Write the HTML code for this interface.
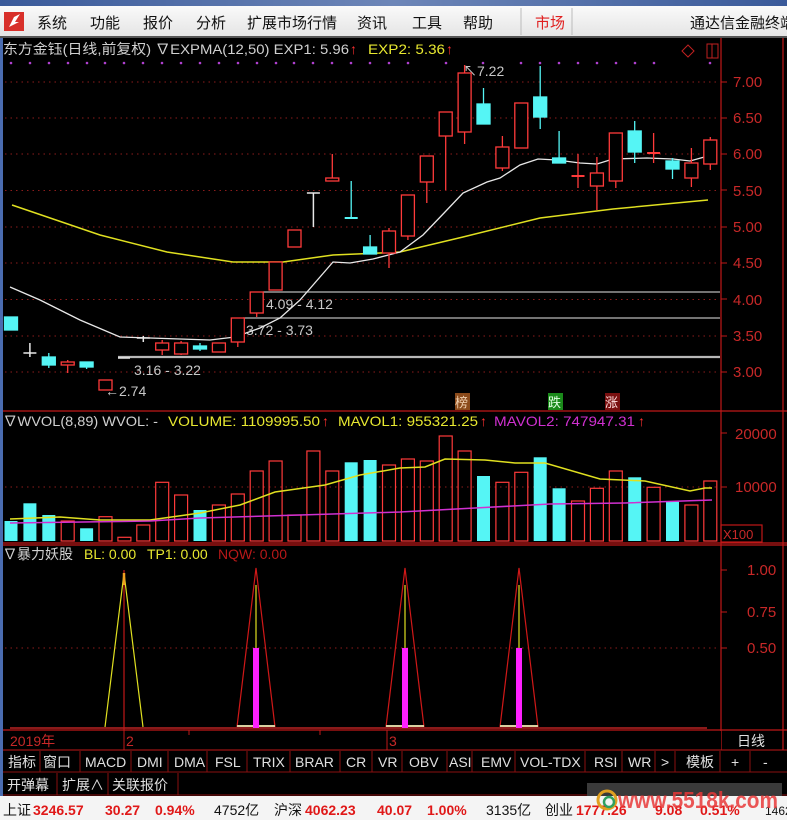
<!DOCTYPE html>
<html><head><meta charset="utf-8"><style>
html,body{margin:0;padding:0;background:#000;width:787px;height:820px;overflow:hidden}
svg{display:block}
text{font-family:"Liberation Sans Narrow","Liberation Sans","Noto Sans CJK SC",sans-serif}
.cj{font-family:"Liberation Sans","Noto Sans CJK SC",sans-serif}
</style></head><body>
<svg width="787" height="820" viewBox="0 0 787 820" xmlns="http://www.w3.org/2000/svg">
<defs>
<linearGradient id="mb" x1="0" y1="0" x2="0" y2="1"><stop offset="0" stop-color="#fafafa"/><stop offset="1" stop-color="#e4e4e4"/></linearGradient>
<linearGradient id="tb" x1="0" y1="0" x2="1" y2="0"><stop offset="0" stop-color="#3a5a9a"/><stop offset="0.5" stop-color="#6d86b8"/><stop offset="1" stop-color="#3a5a9a"/></linearGradient>
</defs>
<rect width="787" height="820" fill="#000"/>
<!-- menu -->
<rect x="0" y="0" width="787" height="6" fill="url(#tb)"/>
<rect x="0" y="6" width="787" height="31" fill="url(#mb)"/>
<rect x="0" y="36" width="787" height="2" fill="#555"/>
<rect x="4" y="12" width="20" height="19" fill="#d8302a"/>
<path d="M9 27 L14 17 L20 14 L15 22 L19 22 Z" fill="#fff"/>
<g class="cj" font-size="15" fill="#111">
<text x="37" y="28" class="cj">系统</text><text x="90" y="28" class="cj">功能</text><text x="143" y="28" class="cj">报价</text><text x="196" y="28" class="cj">分析</text><text x="247" y="28" class="cj">扩展市场行情</text><text x="357" y="28" class="cj">资讯</text><text x="412" y="28" class="cj">工具</text><text x="463" y="28" class="cj">帮助</text>
<text x="535" y="28" class="cj" fill="#e02020">市场</text>
<text x="690" y="28" class="cj">通达信金融终端</text>
</g>
<line x1="521" y1="8" x2="521" y2="35" stroke="#bbb"/><line x1="572" y1="8" x2="572" y2="35" stroke="#bbb"/>
<rect x="0" y="38" width="3" height="782" fill="#4a6cb0"/>

<!-- title -->
<g font-size="14">
<text x="3" y="54" fill="#d0d0d0" class="cj" textLength="346" lengthAdjust="spacingAndGlyphs">东方金钰(日线,前复权) ∇EXPMA(12,50)  EXP1: 5.96</text>
<text x="350" y="54" fill="#ff3030">↑</text>
<text x="368" y="54" fill="#e8e830" textLength="77" lengthAdjust="spacingAndGlyphs">EXP2: 5.36</text>
<text x="446" y="54" fill="#ff3030">↑</text>
</g>
<path d="M688 45 L694 51 L688 57 L682 51 Z" fill="none" stroke="#c02020"/>
<rect x="707" y="44" width="11" height="14" fill="none" stroke="#c02020"/><line x1="712" y1="44" x2="712" y2="58" stroke="#c02020"/>

<!-- frames -->
<g stroke="#c01818" stroke-width="1.2" fill="none">
<line x1="721" y1="38" x2="721" y2="750"/>
<line x1="783" y1="38" x2="783" y2="750"/>
<line x1="3" y1="411" x2="787" y2="411"/>
<line x1="3" y1="543" x2="787" y2="543"/>
<line x1="3" y1="545" x2="787" y2="545"/>
<line x1="3" y1="730" x2="787" y2="730"/>
<rect x="721" y="525" width="41" height="17"/>
</g>

<!-- grid dotted -->
<g stroke="#8c1c1c" stroke-dasharray="1.5,4" stroke-width="1">
<line x1="5" y1="82" x2="718" y2="82"/><line x1="5" y1="118" x2="718" y2="118"/><line x1="5" y1="154" x2="718" y2="154"/><line x1="5" y1="190.5" x2="718" y2="190.5"/><line x1="5" y1="227" x2="718" y2="227"/><line x1="5" y1="263" x2="718" y2="263"/><line x1="5" y1="299.5" x2="718" y2="299.5"/><line x1="5" y1="336" x2="718" y2="336"/><line x1="5" y1="372" x2="718" y2="372"/>
<line x1="5" y1="487" x2="718" y2="487"/><line x1="5" y1="648" x2="718" y2="648"/>
</g>
<!-- purple dots -->
<g fill="#b040d0">
<circle cx="11" cy="63" r="1.3"/><circle cx="30" cy="63" r="1.3"/><circle cx="49" cy="63" r="1.3"/><circle cx="68" cy="63" r="1.3"/><circle cx="87" cy="63" r="1.3"/><circle cx="105" cy="63" r="1.3"/><circle cx="124" cy="63" r="1.3"/><circle cx="143" cy="63" r="1.3"/><circle cx="162" cy="63" r="1.3"/><circle cx="181" cy="63" r="1.3"/><circle cx="200" cy="63" r="1.3"/><circle cx="219" cy="63" r="1.3"/><circle cx="238" cy="63" r="1.3"/><circle cx="257" cy="63" r="1.3"/><circle cx="276" cy="63" r="1.3"/><circle cx="294" cy="63" r="1.3"/><circle cx="313" cy="63" r="1.3"/><circle cx="332" cy="63" r="1.3"/><circle cx="351" cy="63" r="1.3"/><circle cx="370" cy="63" r="1.3"/><circle cx="389" cy="63" r="1.3"/><circle cx="408" cy="63" r="1.3"/><circle cx="446" cy="63" r="1.3"/><circle cx="483" cy="63" r="1.3"/><circle cx="521" cy="63" r="1.3"/><circle cx="540" cy="63" r="1.3"/><circle cx="559" cy="63" r="1.3"/><circle cx="578" cy="63" r="1.3"/><circle cx="597" cy="63" r="1.3"/><circle cx="616" cy="63" r="1.3"/><circle cx="635" cy="63" r="1.3"/><circle cx="654" cy="63" r="1.3"/><circle cx="710" cy="63" r="1.3"/>
</g>

<!-- right axis labels -->
<g font-size="15" fill="#c82828">
<text x="733" y="87">7.00</text><text x="733" y="123">6.50</text><text x="733" y="159">6.00</text><text x="733" y="196">5.50</text><text x="733" y="232">5.00</text><text x="733" y="268">4.50</text><text x="733" y="305">4.00</text><text x="733" y="341">3.50</text><text x="733" y="377">3.00</text>
<text x="735" y="439">20000</text><text x="735" y="492">10000</text>
<text x="747" y="575">1.00</text><text x="747" y="617">0.75</text><text x="747" y="653">0.50</text>
<text x="723" y="539" font-size="13">X100</text>
</g>
<g stroke="#c01818">
<line x1="721" y1="82" x2="727" y2="82"/><line x1="721" y1="118" x2="727" y2="118"/><line x1="721" y1="154" x2="727" y2="154"/><line x1="721" y1="190" x2="727" y2="190"/><line x1="721" y1="227" x2="727" y2="227"/><line x1="721" y1="263" x2="727" y2="263"/><line x1="721" y1="299" x2="727" y2="299"/><line x1="721" y1="336" x2="727" y2="336"/><line x1="721" y1="372" x2="727" y2="372"/>
<line x1="721" y1="433" x2="727" y2="433"/><line x1="721" y1="487" x2="727" y2="487"/>
<line x1="721" y1="570" x2="727" y2="570"/><line x1="721" y1="612" x2="727" y2="612"/><line x1="721" y1="648" x2="727" y2="648"/>
</g>

<!-- support lines -->
<g stroke="#b8b8b8">
<line x1="263" y1="292" x2="720" y2="292" stroke-width="1.3"/>
<line x1="243" y1="318" x2="720" y2="318" stroke-width="1.3"/>
<line x1="118" y1="357" x2="720" y2="357" stroke-width="2.2"/>
</g>
<g font-size="14" fill="#c8c8c8">
<text x="266" y="309">4.09 - 4.12</text>
<text x="246" y="335">3.72 - 3.73</text>
<text x="134" y="375">3.16 - 3.22</text>
<text x="105" y="396">←2.74</text>
<text x="463" y="76">↖7.22</text>
</g>

<!-- EMA lines -->
<polyline fill="none" stroke="#e0e020" stroke-width="1.5" points="12,205 100,235 167,252 233,262 283,262 333,255 380,253 400,252 463,237 540,218 613,209 708,200"/>
<polyline fill="none" stroke="#e8e8e8" stroke-width="1.3" points="10,287 40,300 80,320 120,337 150,338 210,340 235,337 260,328 280,318 300,300 333,262 350,263 373,259 400,252 423,235 445,212 463,193 487,182 500,178 520,165 538,159 557,160 580,163 597,164 613,159 647,158 673,159 690,161 708,156"/>

<!-- candles -->
<g stroke="#ff3a3a" stroke-width="1.3" fill="#000">
<line x1="67.7" y1="360" x2="67.7" y2="373"/><rect x="61.2" y="362" width="13" height="3"/>
<rect x="99" y="380" width="13" height="10"/>
<line x1="162.2" y1="340" x2="162.2" y2="355"/><rect x="155.7" y="343" width="13" height="7"/>
<line x1="181.1" y1="341" x2="181.1" y2="355"/><rect x="174.6" y="343" width="13" height="11"/>
<rect x="212.4" y="343" width="13" height="9"/>
<line x1="237.8" y1="342" x2="237.8" y2="347"/><rect x="231.3" y="318" width="13" height="24"/>
<line x1="256.7" y1="313" x2="256.7" y2="317"/><rect x="250.2" y="292" width="13" height="21"/>
<rect x="269.1" y="262" width="13" height="28"/>
<rect x="288" y="230" width="13" height="17"/>
<line x1="332.3" y1="154" x2="332.3" y2="178"/><rect x="325.8" y="178" width="13" height="3"/>
<line x1="389" y1="228" x2="389" y2="268"/><rect x="382.5" y="231" width="13" height="22"/>
<line x1="407.9" y1="236" x2="407.9" y2="240"/><rect x="401.4" y="195" width="13" height="41"/>
<line x1="426.8" y1="182" x2="426.8" y2="203"/><rect x="420.3" y="156" width="13" height="26"/>
<line x1="445.7" y1="136" x2="445.7" y2="190"/><rect x="439.2" y="112" width="13" height="24"/>
<line x1="464.6" y1="65" x2="464.6" y2="144"/><rect x="458.1" y="73" width="13" height="59"/>
<line x1="502.4" y1="136" x2="502.4" y2="171"/><rect x="495.9" y="147" width="13" height="21"/>
<rect x="514.8" y="103" width="13" height="45"/>
<line x1="578" y1="154" x2="578" y2="188"/><line x1="571.5" y1="176" x2="584.5" y2="176" stroke-width="2"/>
<line x1="596.9" y1="157" x2="596.9" y2="210"/><rect x="590.4" y="173" width="13" height="13"/>
<line x1="615.8" y1="181" x2="615.8" y2="188"/><rect x="609.3" y="133" width="13" height="48"/>
<line x1="653.6" y1="133" x2="653.6" y2="163"/><line x1="647.1" y1="153" x2="660.1" y2="153" stroke-width="2"/>
<line x1="691.4" y1="148" x2="691.4" y2="187"/><rect x="684.9" y="163" width="13" height="15"/>
<line x1="710.3" y1="137" x2="710.3" y2="170"/><rect x="703.8" y="140" width="13" height="24"/>
</g>
<g stroke="#55f5f5" stroke-width="1.3" fill="#55f5f5">
<rect x="4.5" y="317" width="13" height="13"/>
<line x1="48.8" y1="353" x2="48.8" y2="368"/><rect x="42.3" y="357" width="13" height="8"/>
<line x1="86.6" y1="362" x2="86.6" y2="369"/><rect x="80.1" y="362" width="13" height="5"/>
<line x1="200" y1="343" x2="200" y2="351"/><rect x="193.5" y="346" width="13" height="3"/>
<line x1="351.2" y1="181" x2="351.2" y2="218"/><line x1="344.7" y1="218" x2="357.7" y2="218" stroke-width="2"/>
<line x1="370.1" y1="235" x2="370.1" y2="247"/><rect x="363.6" y="247" width="13" height="7"/>
<line x1="483.5" y1="88" x2="483.5" y2="104"/><rect x="477" y="104" width="13" height="20"/>
<line x1="540.2" y1="66" x2="540.2" y2="129"/><rect x="533.7" y="97" width="13" height="20"/>
<line x1="559.1" y1="131" x2="559.1" y2="163"/><rect x="552.6" y="158" width="13" height="5"/>
<line x1="634.7" y1="121" x2="634.7" y2="163"/><rect x="628.2" y="131" width="13" height="21"/>
<line x1="672.5" y1="158" x2="672.5" y2="179"/><rect x="666" y="161" width="13" height="8"/>
</g>
<g stroke="#e8e8e8" stroke-width="1.5">
<line x1="29.9" y1="343" x2="29.9" y2="357"/><line x1="23.4" y1="353" x2="36.4" y2="353"/>
<line x1="118" y1="358" x2="130" y2="358"/>
<line x1="143.3" y1="336" x2="143.3" y2="342"/><line x1="136.8" y1="338" x2="149.8" y2="338"/>
<line x1="313.4" y1="193" x2="313.4" y2="227"/><line x1="306.9" y1="193" x2="319.9" y2="193"/>
</g>

<!-- markers -->
<rect x="455" y="393" width="15" height="17" fill="#8b4a1a"/><text x="455" y="407" font-size="13" fill="#f0d0b0" class="cj">榜</text>
<rect x="548" y="393" width="15" height="17" fill="#1a8a1a"/><text x="548" y="407" font-size="13" fill="#e0ffe0" class="cj">跌</text>
<rect x="605" y="393" width="15" height="17" fill="#7a1010"/><text x="605" y="407" font-size="13" fill="#ffe0e0" class="cj">涨</text>

<!-- volume title -->
<g font-size="14">
<text x="3" y="426" fill="#d0d0d0" textLength="155" lengthAdjust="spacingAndGlyphs">∇WVOL(8,89)  WVOL: -</text>
<text x="168" y="426" fill="#e8e830" textLength="152" lengthAdjust="spacingAndGlyphs">VOLUME: 1109995.50</text>
<text x="322" y="426" fill="#ff3030">↑</text>
<text x="338" y="426" fill="#e8e830" textLength="140" lengthAdjust="spacingAndGlyphs">MAVOL1: 955321.25</text>
<text x="480" y="426" fill="#ff3030">↑</text>
<text x="494" y="426" fill="#d030d0" textLength="141" lengthAdjust="spacingAndGlyphs">MAVOL2: 747947.31</text>
<text x="638" y="426" fill="#ff3030">↑</text>
</g>

<!-- volume bars -->
<g stroke="#ff3a3a" stroke-width="1.2" fill="none">
<rect x="61.2" y="521" width="13" height="20"/><rect x="99" y="516.7" width="13" height="24.3"/><rect x="117.9" y="537.3" width="13" height="3.7"/><rect x="136.8" y="525" width="13" height="16"/><rect x="155.7" y="482.3" width="13" height="58.7"/><rect x="174.6" y="495" width="13" height="46"/><rect x="212.4" y="505" width="13" height="36"/><rect x="231.3" y="494" width="13" height="47"/><rect x="250.2" y="471" width="13" height="70"/><rect x="269.1" y="461" width="13" height="80"/><rect x="288" y="515" width="13" height="26"/><rect x="306.9" y="451" width="13" height="90"/><rect x="325.8" y="471" width="13" height="70"/><rect x="382.5" y="465" width="13" height="76"/><rect x="401.4" y="459" width="13" height="82"/><rect x="420.3" y="461" width="13" height="80"/><rect x="439.2" y="436" width="13" height="105"/><rect x="458.1" y="451" width="13" height="90"/><rect x="495.9" y="482.3" width="13" height="58.7"/><rect x="514.8" y="472.3" width="13" height="68.7"/><rect x="571.5" y="501" width="13" height="40"/><rect x="590.4" y="488.3" width="13" height="52.7"/><rect x="609.3" y="471" width="13" height="70"/><rect x="647.1" y="487.3" width="13" height="53.7"/><rect x="684.9" y="505" width="13" height="36"/><rect x="703.8" y="481" width="13" height="60"/>
</g>
<g fill="#55f5f5">
<rect x="4.5" y="521" width="13" height="20"/><rect x="23.4" y="503.3" width="13" height="37.7"/><rect x="42.3" y="515" width="13" height="26"/><rect x="80.1" y="528.3" width="13" height="12.7"/><rect x="193.5" y="510" width="13" height="31"/><rect x="344.7" y="462.3" width="13" height="78.7"/><rect x="363.6" y="460" width="13" height="81"/><rect x="477" y="476" width="13" height="65"/><rect x="533.7" y="457.3" width="13" height="83.7"/><rect x="552.6" y="488.3" width="13" height="52.7"/><rect x="628.2" y="477.3" width="13" height="63.7"/><rect x="666" y="501.7" width="13" height="39.3"/>
</g>
<polyline fill="none" stroke="#e0e020" stroke-width="1.5" points="10,519 60,517 100,520 150,520 200,513 240,505 275,492 325,485 360,475 400,468 425,467 445,459 485,460 515,463 545,463 600,479 645,481 690,491 705,488 712,488"/>
<polyline fill="none" stroke="#d030d0" stroke-width="1.5" points="10,523 150,521 200,518 300,515 400,512 475,508 550,504 625,503 712,500"/>

<!-- indicator title -->
<g font-size="14">
<text x="3" y="559" fill="#d0d0d0" class="cj">∇暴力妖股</text>
<text x="84" y="559" fill="#e8e830">BL: 0.00</text>
<text x="147" y="559" fill="#e8e830">TP1: 0.00</text>
<text x="218" y="559" fill="#b81818">NQW: 0.00</text>
</g>
<!-- indicator -->
<line x1="10" y1="728" x2="707" y2="728" stroke="#8a1a1a" stroke-width="2"/>
<g fill="none" stroke-width="1.2">
<polyline stroke="#e0e020" points="105,727 124,573 143,727"/>
<line x1="124" y1="570" x2="124" y2="730" stroke="#c01818"/>
<line x1="124" y1="573" x2="124" y2="585" stroke="#f0a020" stroke-width="2.5"/>
<polyline stroke="#d01818" points="237,727 256,568 275,727"/>
<polyline stroke="#d01818" points="386,727 405,568 424,727"/>
<polyline stroke="#d01818" points="500,727 519,568 538,727"/>
<line x1="256" y1="585" x2="256" y2="648" stroke="#e0e020"/>
<line x1="405" y1="585" x2="405" y2="648" stroke="#e0e020"/>
<line x1="519" y1="585" x2="519" y2="648" stroke="#e0e020"/>
<line x1="237" y1="726" x2="275" y2="726" stroke="#d8d0a0" stroke-width="2"/>
<line x1="386" y1="726" x2="424" y2="726" stroke="#d8d0a0" stroke-width="2"/>
<line x1="500" y1="726" x2="538" y2="726" stroke="#d8d0a0" stroke-width="2"/>
</g>
<rect x="253" y="648" width="6" height="80" fill="#ff20ff"/>
<rect x="402" y="648" width="6" height="80" fill="#ff20ff"/>
<rect x="516" y="648" width="6" height="80" fill="#ff20ff"/>

<!-- date bar -->
<rect x="3" y="731" width="718" height="19" fill="#000"/>
<g stroke="#c01818"><line x1="124" y1="730" x2="124" y2="750"/><line x1="189" y1="730" x2="189" y2="735"/><line x1="320" y1="730" x2="320" y2="735"/><line x1="387" y1="730" x2="387" y2="750"/><line x1="3" y1="750" x2="787" y2="750"/></g>
<g font-size="14"><text x="10" y="746" fill="#c82828" class="cj">2019年</text><text x="126" y="746" fill="#c82828">2</text><text x="389" y="746" fill="#c82828">3</text><text x="737" y="746" fill="#e0e0e0" class="cj">日线</text></g>

<!-- buttons -->
<g stroke="#8a1010" fill="none">
<line x1="3" y1="772" x2="787" y2="772"/><line x1="3" y1="795" x2="787" y2="795"/>
<line x1="40" y1="751" x2="40" y2="772"/><line x1="80" y1="751" x2="80" y2="772"/><line x1="131" y1="751" x2="131" y2="772"/><line x1="168" y1="751" x2="168" y2="772"/><line x1="207" y1="751" x2="207" y2="772"/><line x1="247" y1="751" x2="247" y2="772"/><line x1="290" y1="751" x2="290" y2="772"/><line x1="340" y1="751" x2="340" y2="772"/><line x1="372" y1="751" x2="372" y2="772"/><line x1="402" y1="751" x2="402" y2="772"/><line x1="447" y1="751" x2="447" y2="772"/><line x1="472" y1="751" x2="472" y2="772"/><line x1="515" y1="751" x2="515" y2="772"/><line x1="585" y1="751" x2="585" y2="772"/><line x1="622" y1="751" x2="622" y2="772"/><line x1="655" y1="751" x2="655" y2="772"/><line x1="675" y1="751" x2="675" y2="772"/><line x1="720" y1="751" x2="720" y2="772"/><line x1="750" y1="751" x2="750" y2="772"/>
<line x1="57" y1="773" x2="57" y2="795"/><line x1="108" y1="773" x2="108" y2="795"/><line x1="178" y1="773" x2="178" y2="795"/>
</g>
<g font-size="14" fill="#e0e0e0">
<text x="8" y="767" class="cj">指标</text><text x="43" y="767" class="cj">窗口</text><text x="85" y="767">MACD</text><text x="137" y="767">DMI</text><text x="174" y="767">DMA</text><text x="215" y="767">FSL</text><text x="253" y="767">TRIX</text><text x="295" y="767">BRAR</text><text x="346" y="767">CR</text><text x="378" y="767">VR</text><text x="409" y="767">OBV</text><text x="449" y="767">ASI</text><text x="481" y="767">EMV</text><text x="520" y="767">VOL-TDX</text><text x="594" y="767">RSI</text><text x="628" y="767">WR</text><text x="661" y="767">&gt;</text><text x="686" y="767" class="cj">模板</text><text x="731" y="767">+</text><text x="763" y="767">-</text>
<text x="7" y="790" class="cj">开弹幕</text><text x="62" y="790" class="cj">扩展∧</text><text x="112" y="790" class="cj">关联报价</text>
</g>

<!-- status bar -->
<rect x="0" y="796" width="787" height="24" fill="#f4f4f4"/>
<rect x="587" y="783" width="195" height="13" fill="#3a3a3a"/>
<g font-size="14">
<text x="3" y="815" fill="#111" class="cj">上证</text>
<text x="33" y="815" fill="#e01818" font-weight="bold">3246.57</text>
<text x="105" y="815" fill="#e01818" font-weight="bold">30.27</text>
<text x="155" y="815" fill="#e01818" font-weight="bold">0.94%</text>
<text x="214" y="815" fill="#111" class="cj">4752亿</text>
<text x="274" y="815" fill="#111" class="cj">沪深</text>
<text x="305" y="815" fill="#e01818" font-weight="bold">4062.23</text>
<text x="377" y="815" fill="#e01818" font-weight="bold">40.07</text>
<text x="427" y="815" fill="#e01818" font-weight="bold">1.00%</text>
<text x="486" y="815" fill="#111" class="cj">3135亿</text>
<text x="545" y="815" fill="#111" class="cj">创业</text>
<text x="576" y="815" fill="#e01818" font-weight="bold">1777.26</text>
<text x="655" y="815" fill="#e01818" font-weight="bold">9.08</text>
<text x="700" y="815" fill="#e01818" font-weight="bold">0.51%</text>
<text x="765" y="815" fill="#111" font-size="12">1462</text>
</g>
<circle cx="607" cy="800" r="9" fill="none" stroke="#e0a020" stroke-width="3"/>
<circle cx="609" cy="802" r="5" fill="none" stroke="#30a060" stroke-width="2.5"/>
<text x="618" y="808" font-size="23" font-weight="bold" fill="#e83838" fill-opacity="0.85" font-family="Liberation Sans, sans-serif" textLength="160" lengthAdjust="spacingAndGlyphs">www.5518k.com</text>
</svg>
</body></html>
